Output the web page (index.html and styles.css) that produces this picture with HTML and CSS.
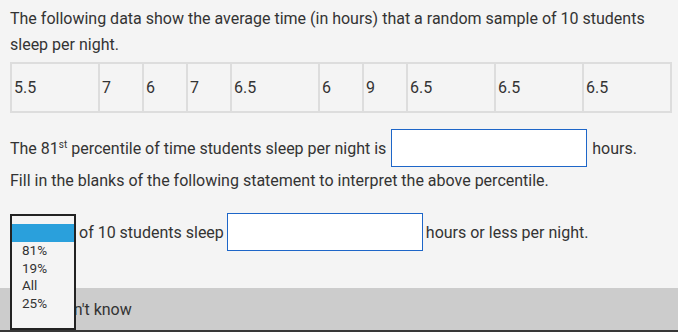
FILE: index.html
```html
<!DOCTYPE html>
<html>
<head>
<meta charset="utf-8">
<link rel="stylesheet" href="styles.css">
</head>
<body>
<div class="main">
  <p class="intro">The following data show the average time (in hours) that a random sample of 10 students sleep per night.</p>
  <table class="data">
    <colgroup>
      <col class="wide"><col class="narrow"><col class="narrow"><col class="narrow"><col class="wide"><col class="narrow"><col class="narrow"><col class="wide"><col class="wide"><col class="wide">
    </colgroup>
    <tr>
      <td>5.5</td><td>7</td><td>6</td><td>7</td><td>6.5</td><td>6</td><td>9</td><td>6.5</td><td>6.5</td><td>6.5</td>
    </tr>
  </table>
  <div class="row row-q1">
    <span>The 81<sup>st</sup> percentile of time students sleep per night is</span>
    <span class="blank"></span>
    <span>hours.</span>
  </div>
  <p class="fill">Fill in the blanks of the following statement to interpret the above percentile.</p>
  <div class="row row-q2">
    <div class="select">
      <div class="listbox">
        <div class="opt sel"></div>
        <div class="opt">81%</div>
        <div class="opt">19%</div>
        <div class="opt">All</div>
        <div class="opt">25%</div>
      </div>
    </div>
    <span>of 10 students sleep</span>
    <span class="blank"></span>
    <span>hours or less per night.</span>
  </div>
</div>
<div class="footer"><span class="dk">Don't know</span></div>
</body>
</html>
```
FILE: styles.css
```css
html, body {
  margin: 0;
  padding: 0;
  background: #f4f4f4;
  font-family: Roboto, "Liberation Sans", sans-serif;
  font-size: 16px;
  color: #333;
}
.main {
  padding: 6px 8px 0 10px;
  height: 288px;
  box-sizing: border-box;
}
.intro {
  margin: 0;
  line-height: 26px;
  width: 650px;
}
.data {
  margin-top: 4px;
  border-collapse: collapse;
  table-layout: fixed;
  width: 660px;
  border: 2px solid #dddddd;
}
.data col.wide { width: 88px; }
.data col.narrow { width: 44px; }
.data td {
  border: 2px solid #dddddd;
  height: 47px;
  padding: 0 2px;
  font-size: 16px;
  line-height: 18px;
}
.row {
  display: flex;
  align-items: center;
  gap: 5px;
}
.row-q1 {
  margin-top: 16px;
}
.blank {
  display: block;
  width: 194px;
  height: 36px;
  background: #fff;
  border: 1px solid #1e66c8;
}
sup {
  font-size: 10px;
  line-height: 0;
  vertical-align: 6px;
}
.fill {
  margin: 5px 0 0;
  line-height: 18px;
}
.row-q2 {
  margin-top: 23px;
  gap: 3px;
}
.select {
  position: relative;
  width: 66px;
  height: 36px;
  align-self: flex-start;
  margin-top: 1px;
}
.listbox {
  position: absolute;
  left: 0;
  top: 0;
  width: 62px;
  height: 104px;
  border: 2px solid #222;
  background: #f4f4f4;
  padding-top: 8px;
  box-sizing: content-box;
  z-index: 2;
}
.opt {
  height: 17.6px;
  line-height: 17.6px;
  font-size: 13.5px;
  padding-left: 10px;
  color: #333;
}
.opt.sel {
  background: #2aa0dc;
  height: 18px;
}
.footer {
  background: #cccccc;
  height: 42px;
  border-bottom: 2px solid #383838;
  display: flex;
  align-items: center;
  padding-left: 54px;
}
.dk {
  font-size: 16px;
  color: #333;
}
```
